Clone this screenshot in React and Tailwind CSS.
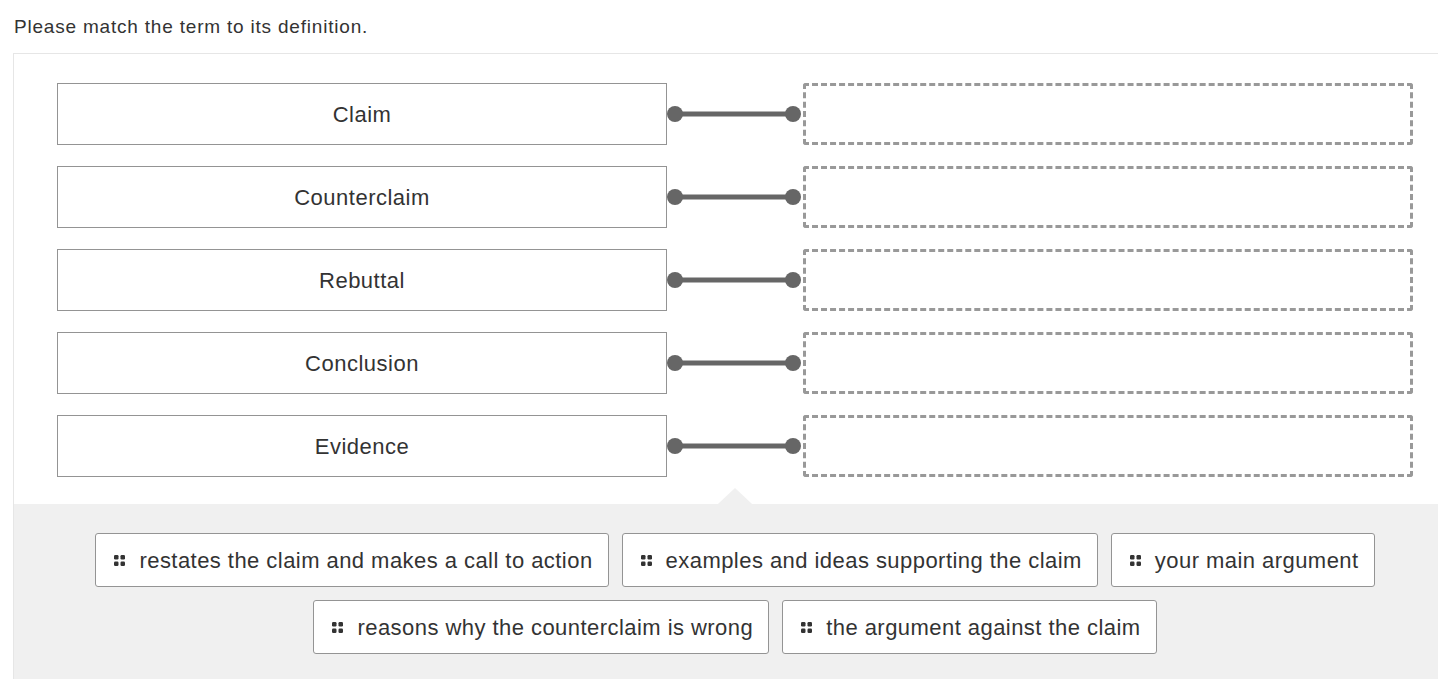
import React from 'react'

const terms = ['Claim', 'Counterclaim', 'Rebuttal', 'Conclusion', 'Evidence']
const rowOne = ['restates the claim and makes a call to action', 'examples and ideas supporting the claim', 'your main argument']
const rowTwo = ['reasons why the counterclaim is wrong', 'the argument against the claim']

function Grip() {
  return (
    <svg width="11" height="11" viewBox="0 0 11 11" className="flex-shrink-0">
      <rect x="0" y="0" width="4.5" height="4.5" rx="1.2" fill="#333" />
      <rect x="6.5" y="0" width="4.5" height="4.5" rx="1.2" fill="#333" />
      <rect x="0" y="6.5" width="4.5" height="4.5" rx="1.2" fill="#333" />
      <rect x="6.5" y="6.5" width="4.5" height="4.5" rx="1.2" fill="#333" />
    </svg>
  )
}

function Chip({ label }) {
  return (
    <div className="h-[54px] flex items-center gap-[14px] pl-[18px] pr-[15px] bg-white border border-[#949494] rounded-[3px] text-[22px] tracking-[0.45px] text-[#333]">
      <Grip />
      <span>{label}</span>
    </div>
  )
}

function Connector() {
  return (
    <svg width="136" height="20" viewBox="0 0 136 20" className="flex-shrink-0">
      <line x1="8" y1="10" x2="126" y2="10" stroke="#666" strokeWidth="5" />
      <circle cx="8" cy="10" r="8" fill="#666" />
      <circle cx="126" cy="10" r="8" fill="#666" />
    </svg>
  )
}

export default function App() {
  return (
    <div className="w-[1438px] h-[679px] overflow-hidden bg-white text-[#333]" style={{ fontFamily: '"Liberation Sans", Arial, sans-serif' }}>
      <p className="pl-[14px] pt-[15px] text-[19px] tracking-[0.8px] leading-[24px] h-[53px]">Please match the term to its definition.</p>

      <div className="ml-[13px] w-[1443px] border border-[#e6e6e6]">
        {/* Matching rows */}
        <div className="pt-[29px] pb-[27px] pl-[43px] flex flex-col gap-[21px]">
          {terms.map((t) => (
            <div key={t} className="flex items-center">
              <div className="w-[610px] h-[62px] border border-[#949494] flex items-center justify-center text-[22px] tracking-[0.5px]">
                {t}
              </div>
              <Connector />
              <div className="w-[610px] h-[62px] border-[3px] border-dashed border-[#999] rounded-[3px]" />
            </div>
          ))}
        </div>

        {/* Answer pool */}
        <div className="relative bg-[#f0f0f0] pt-[29px] pb-[30px] flex flex-col items-center gap-[13px] pl-[1px]">
          <div className="absolute left-[704px] -top-[16px] w-0 h-0 border-l-[17px] border-r-[17px] border-b-[16px] border-l-transparent border-r-transparent border-b-[#f0f0f0]" />
          <div className="flex gap-[13px]">
            {rowOne.map((c) => <Chip key={c} label={c} />)}
          </div>
          <div className="flex gap-[13px]">
            {rowTwo.map((c) => <Chip key={c} label={c} />)}
          </div>
        </div>
      </div>
    </div>
  )
}
